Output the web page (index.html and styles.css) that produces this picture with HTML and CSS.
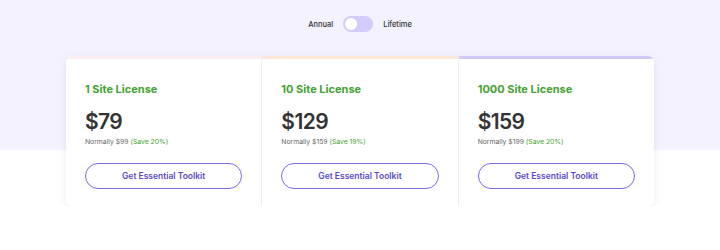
FILE: index.html
```html
<!DOCTYPE html>
<html lang="en">
<head>
    <meta charset="UTF-8">
    <meta name="viewport" content="width=device-width, initial-scale=1.0">
    <title>Pricing</title>
    <link rel="stylesheet" href="styles.css">
</head>
<body>
    <div class="hero">
        <div class="billing-toggle">
            <span>Annual</span>
            <span class="switch"><span class="knob"></span></span>
            <span>Lifetime</span>
        </div>
    </div>
    <div class="plans">
        <div class="plan plan-pink">
            <h3 class="plan-name">1 Site License</h3>
            <div class="plan-price">$79</div>
            <p class="plan-note">Normally $99 <span class="save">(Save 20%)</span></p>
            <button class="plan-btn">Get Essential Toolkit</button>
        </div>
        <div class="plan plan-peach">
            <h3 class="plan-name">10 Site License</h3>
            <div class="plan-price">$129</div>
            <p class="plan-note">Normally $159 <span class="save">(Save 19%)</span></p>
            <button class="plan-btn">Get Essential Toolkit</button>
        </div>
        <div class="plan plan-purple">
            <h3 class="plan-name">1000 Site License</h3>
            <div class="plan-price">$159</div>
            <p class="plan-note">Normally $199 <span class="save">(Save 20%)</span></p>
            <button class="plan-btn">Get Essential Toolkit</button>
        </div>
    </div>
</body>
</html>
```

FILE: styles.css
```css
body {
    font-family: Inter, 'Noto Sans', sans-serif;
    margin: 0;
    padding: 0;
    background-color: #fff;
    color: #333;
}
.hero {
    background-color: #f4f2fe;
    height: 150px;
    padding-top: 16px;
    box-sizing: border-box;
}
.billing-toggle {
    display: flex;
    justify-content: center;
    align-items: center;
    gap: 10px;
    font-size: 7.5px;
    font-weight: 500;
    color: #333;
}
.switch {
    width: 30px;
    height: 16px;
    border-radius: 8px;
    background-color: #d3ccfa;
    display: flex;
    align-items: center;
    padding: 0 2px;
    box-sizing: border-box;
}
.knob {
    width: 12px;
    height: 12px;
    border-radius: 50%;
    background: #fff;
}
.plans {
    display: flex;
    width: 588px;
    margin: -94px auto 0;
    background: #fff;
    border-radius: 6px;
    box-shadow: 0 2px 8px rgba(0, 0, 0, 0.08);
    overflow: hidden;
}
.plan {
    flex: 1;
    padding: 22px 19px 17px;
    border-top: 3px solid #fdeff1;
    border-right: 1px solid #eeeef2;
}
.plan:last-child {
    border-right: none;
}
.plan-peach {
    border-top-color: #fde7d6;
}
.plan-purple {
    border-top-color: #d0c8f6;
}
.plan-name {
    margin: 0;
    font-size: 11px;
    font-weight: 700;
    color: #43a331;
    line-height: 16px;
}
.plan-price {
    margin-top: 12px;
    font-size: 21px;
    font-weight: 600;
    letter-spacing: -0.6px;
    line-height: 26px;
    color: #333;
}
.plan-note {
    margin: 1px 0 0;
    font-size: 6.8px;
    color: #666;
    line-height: 12px;
}
.plan-note .save {
    color: #43a331;
}
.plan-btn {
    display: block;
    width: 100%;
    margin-top: 15px;
    height: 26px;
    border: 1px solid #7a68e6;
    border-radius: 13px;
    background: #fff;
    color: #5a48c8;
    font-family: inherit;
    font-size: 8.5px;
    font-weight: 600;
    cursor: pointer;
}
```
